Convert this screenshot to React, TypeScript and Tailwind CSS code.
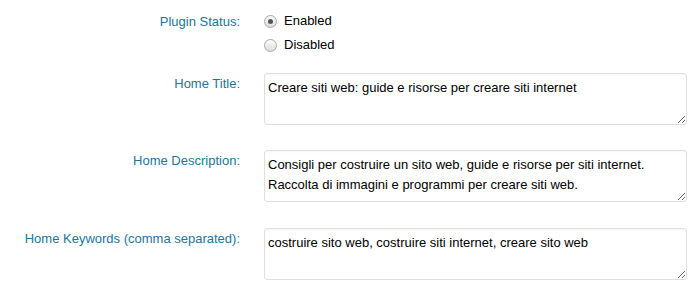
import { useState } from 'react';

const labelCls = 'text-right text-[13px] leading-[16px] text-[#21759b]';
const fieldCls =
  'block w-[423px] h-[52px] resize-y rounded-[3px] border border-[#dfdfdf] bg-white px-[3px] pt-[4px] text-[13px] leading-[20px] text-black outline-none shadow-[inset_0_1px_2px_rgba(0,0,0,0.04)]';

function Radio({ checked, label, onClick }: { checked: boolean; label: string; onClick: () => void }) {
  return (
    <button type="button" onClick={onClick} className="flex h-[24px] items-center gap-[7px] text-[13px] text-[#333]">
      <span className="flex h-[13px] w-[13px] items-center justify-center rounded-full border border-[#aaa] bg-gradient-to-b from-[#fcfcfc] to-[#dcdcdc]">
        {checked && <span className="h-[5px] w-[5px] rounded-full bg-[#555]" />}
      </span>
      <span className="text-black">{label}</span>
    </button>
  );
}

export default function App() {
  const [enabled, setEnabled] = useState(true);

  const rows = [
    { label: 'Home Title:', value: 'Creare siti web: guide e risorse per creare siti internet', mt: 'mt-[16px]' },
    {
      label: 'Home Description:',
      value:
        'Consigli per costruire un sito web, guide e risorse per siti internet. Raccolta di immagini e programmi per creare siti web.',
      mt: 'mt-[25px]',
    },
    {
      label: 'Home Keywords (comma separated):',
      value: 'costruire sito web, costruire siti internet, creare sito web',
      mt: 'mt-[26px]',
    },
  ];

  return (
    <div className="h-[287px] w-[700px] bg-white" style={{ fontFamily: "'Liberation Sans', Arial, sans-serif" }}>
      <div className="grid grid-cols-[240px_423px] gap-x-[24px] pt-[9px]">
        {/* Plugin status */}
        <div className={`${labelCls} pt-[5px]`}>Plugin Status:</div>
        <div className="flex flex-col">
          <Radio checked={enabled} label="Enabled" onClick={() => setEnabled(true)} />
          <Radio checked={!enabled} label="Disabled" onClick={() => setEnabled(false)} />
        </div>

        {rows.map((row) => (
          <div key={row.label} className="contents">
            <div className={`${labelCls} ${row.mt} pt-[3px]`}>{row.label}</div>
            <textarea className={`${fieldCls} ${row.mt}`} defaultValue={row.value} />
          </div>
        ))}
      </div>
    </div>
  );
}
